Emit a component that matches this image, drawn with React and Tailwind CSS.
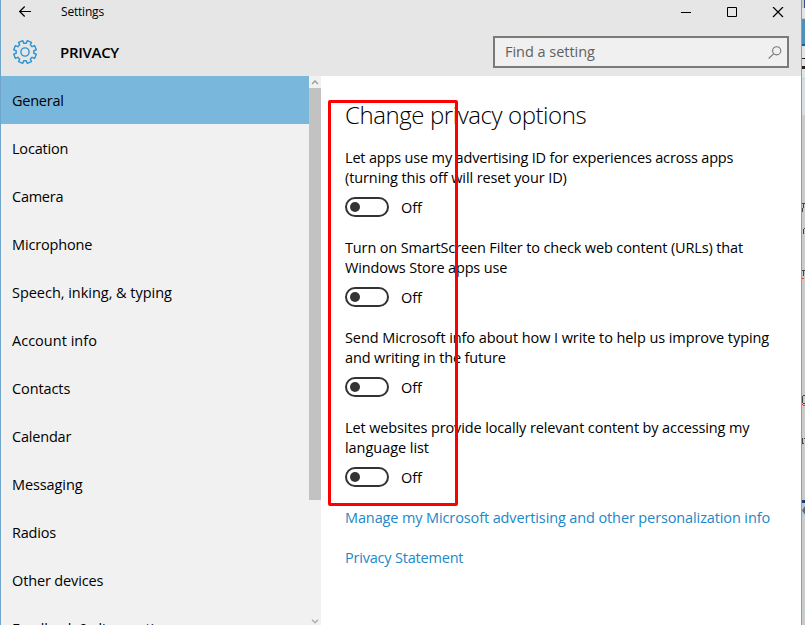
const NAV = [
  ['General', 'tracking-[-0.25px]'],
  ['Location', 'tracking-[-0.2px]'],
  ['Camera', 'tracking-[-0.25px]'],
  ['Microphone', 'tracking-[-0.15px]'],
  ['Speech, inking, & typing', 'tracking-[-0.03px]'],
  ['Account info', 'tracking-[0.02px]'],
  ['Contacts', 'tracking-[-0.1px]'],
  ['Calendar', 'tracking-[-0.2px]'],
  ['Messaging', 'tracking-[-0.1px]'],
  ['Radios', 'tracking-[-0.2px]'],
  ['Other devices', 'tracking-[-0.14px]'],
  ['Feedback & diagnostics', 'tracking-[-0.1px]'],
];

const OPTIONS = [
  [
    ['Let apps use my advertising ID for experiences across apps', 'tracking-[-0.17px]'],
    ['(turning this off will reset your ID)', 'tracking-[-0.1px]'],
  ],
  [
    ['Turn on SmartScreen Filter to check web content (URLs) that', 'tracking-[-0.14px]'],
    ['Windows Store apps use', 'tracking-[-0.15px]'],
  ],
  [
    ['Send Microsoft info about how I write to help us improve typing', 'tracking-[-0.08px]'],
    ['and writing in the future', 'tracking-[-0.13px]'],
  ],
  [
    ['Let websites provide locally relevant content by accessing my', 'tracking-[-0.12px]'],
    ['language list', 'tracking-[-0.05px]'],
  ],
];

const GEAR = (() => {
  const pts = [];
  for (let i = 0; i < 8; i++) {
    const a = (i * Math.PI) / 4 + Math.PI / 8;
    [[8.9, -0.25], [11.5, -0.2], [11.5, 0.2], [8.9, 0.25]].forEach(([r, d]) => {
      pts.push(`${(13 + r * Math.cos(a + d)).toFixed(2)},${(13 + r * Math.sin(a + d)).toFixed(2)}`);
    });
  }
  return pts.join(' ');
})();

function Toggle() {
  return (
    <div className="flex h-5 items-center">
      <div className="flex h-5 w-11 items-center rounded-full border-2 border-[#333] pl-[3px]">
        <div className="size-[10px] rounded-full bg-[#333]" />
      </div>
      <span className="ml-3 pt-px tracking-[-0.1px]">Off</span>
    </div>
  );
}

function TitleBar() {
  return (
    <header className="flex h-[76px] shrink-0 justify-between bg-[#e6e6e6]">
      <div>
        <div className="flex h-6 items-center pl-[18px]">
          <svg width="13" height="12" viewBox="0 0 13 12" fill="none" stroke="#000" strokeWidth="1.2">
            <path d="M5.700.5.7 5.500l5 5M.9 5.500h11.100" />
          </svg>
          <span className="ml-[29px] text-[12px] tracking-[-0.2px]">Settings</span>
        </div>
        <div className="flex items-center pl-[11px] pt-[15px]">
          <svg width="26" height="26" viewBox="0 0 26 26" fill="none" stroke="#2a93d0" strokeWidth="1.4" strokeLinejoin="round">
            <polygon points={GEAR} />
            <circle cx="13" cy="13" r="4.1" />
          </svg>
          <span className="ml-[22px] text-[15px] font-semibold leading-5 tracking-[-0.3px]">PRIVACY</span>
        </div>
      </div>
      <div className="flex flex-col items-end pr-3">
        <svg className="mr-[5px] mt-[7px]" width="103" height="11" viewBox="0 0 103 11" fill="none" stroke="#000" strokeWidth="1">
          <path d="M0 5.500h10M46.500.5h9v9h-9z" />
          <path strokeWidth="1.2" d="M92 0l10 10M102 0l-10 10" />
        </svg>
        <div className="mt-[18px] flex h-8 w-[296px] items-center justify-between border-2 border-[#7a7a7a] bg-[#f0f0f0] pl-[10px] pr-[5px]">
          <span className="text-[14.5px] leading-5 tracking-[-0.03px] text-[#606060]">Find a setting</span>
          <svg width="14" height="13" viewBox="0 0 14 13" fill="none" stroke="#777" strokeWidth="1.1">
            <circle cx="8.7" cy="4.8" r="4.1" />
            <path d="M5.8 7.7.7 12.5" />
          </svg>
        </div>
      </div>
    </header>
  );
}

function Sidebar() {
  return (
    <aside className="flex w-[320px] shrink-0 bg-[#f1f1f1]">
      <nav className="h-[549px] w-[308px] overflow-hidden">
        {NAV.map(([label, spacing], i) => (
          <div key={label} className={`flex h-12 items-center whitespace-nowrap pl-[11px] pt-px ${i === 0 ? 'bg-[#7ab7dc]' : ''}`}>
            <span className={spacing}>{label}</span>
          </div>
        ))}
      </nav>
      <div className="flex w-3 flex-col items-center">
        <svg className="h-3 shrink-0" width="8" height="12" viewBox="0 0 8 12" fill="none" stroke="#999" strokeWidth="1.3">
          <path d="M1 8l3-3 3 3" />
        </svg>
        <div className="h-[412px] w-3 shrink-0 bg-[#c2c2c2]" />
        <svg className="mt-auto shrink-0" width="8" height="6" viewBox="0 0 8 6" fill="none" stroke="#aaa" strokeWidth="1.3">
          <path d="M1 .8l3 3 3-3" />
        </svg>
      </div>
    </aside>
  );
}

function Behind() {
  return (
    <svg className="shrink-0" width="3" height="625" viewBox="0 0 3 625">
      <path fill="#cbcbcb" d="M0 0h3v625H0z" />
      <path fill="#3c4f91" d="M2 0h1v8H2z" />
      <path fill="#e3e3e3" d="M0 8h3v10H0zM0 46h3v33H0z" />
      <path fill="#4f8fbd" d="M0 19h3v26H0z" />
      <path fill="#1f5e91" d="M0 44h3v2H0z" />
      <path fill="#222" d="M0 58h3v1H0zM0 66h3v3H0z" />
      <path fill="#d8dde1" d="M0 79h3v36H0z" />
      <path fill="#b9d2e2" d="M0 78h3v1H0zM0 115h3v1H0zM0 610h3v1H0z" />
      <path fill="#444" d="M0 203h3v1H0zM1 204h1v4H1zM0 208h1v4H0zM1 229h1v5H1zM2 228h1v1H2zM0 270h3v1H0zM1 271h1v5H1z" />
      <path fill="#444" d="M0 396h1v7H0zM1 395h2v1H1zM1 403h2v1H1zM0 438h1v6H0zM0 443h2v1H0zM2 438h1v1H2z" />
      <path fill="#e33" d="M0 278h2v1H0zM0 404h1v1H0zM1 405h2v1H1z" />
      <path fill="#1c3a6e" d="M0 500h3v3H0z" />
      <path fill="#b5cad8" d="M0 503h3v13H0z" />
      <path fill="#666" d="M3 506L0 510.500l3 4z" />
    </svg>
  );
}

export default function App() {
  return (
    <div className="relative flex h-[625px] w-[805px] overflow-hidden bg-white font-['Open_Sans','Noto_Sans',sans-serif] text-[14.5px] leading-5 text-black">
      <div className="flex w-[802px] shrink-0 flex-col border-x border-[#6fa5c8]">
        <TitleBar />
        <div className="flex min-h-0 flex-1">
          <Sidebar />
          <main className="flex-1 whitespace-nowrap pl-6 pt-[23px]">
            <h1 className="text-[24px] font-[350] leading-8 tracking-[-0.42px]">Change privacy options</h1>
            <div className="mt-[17px] flex flex-col gap-[30px]">
              {OPTIONS.map((lines) => (
                <section key={lines[0][0]} className="h-[60px]">
                  {lines.map(([text, spacing]) => (
                    <p key={text} className={spacing}>{text}</p>
                  ))}
                  <div className="pt-[9px]">
                    <Toggle />
                  </div>
                </section>
              ))}
            </div>
            <div className="mt-[30px] flex flex-col gap-5 text-[#2088c8]">
              <a className="tracking-[-0.12px]">Manage my Microsoft advertising and other personalization info</a>
              <a className="tracking-[-0.2px]">Privacy Statement</a>
            </div>
          </main>
        </div>
      </div>
      <Behind />
      <div className="absolute left-[328px] top-[100px] h-[406px] w-[130px] rounded-[2px] border-[3px] border-[#fe0000]" />
    </div>
  );
}
